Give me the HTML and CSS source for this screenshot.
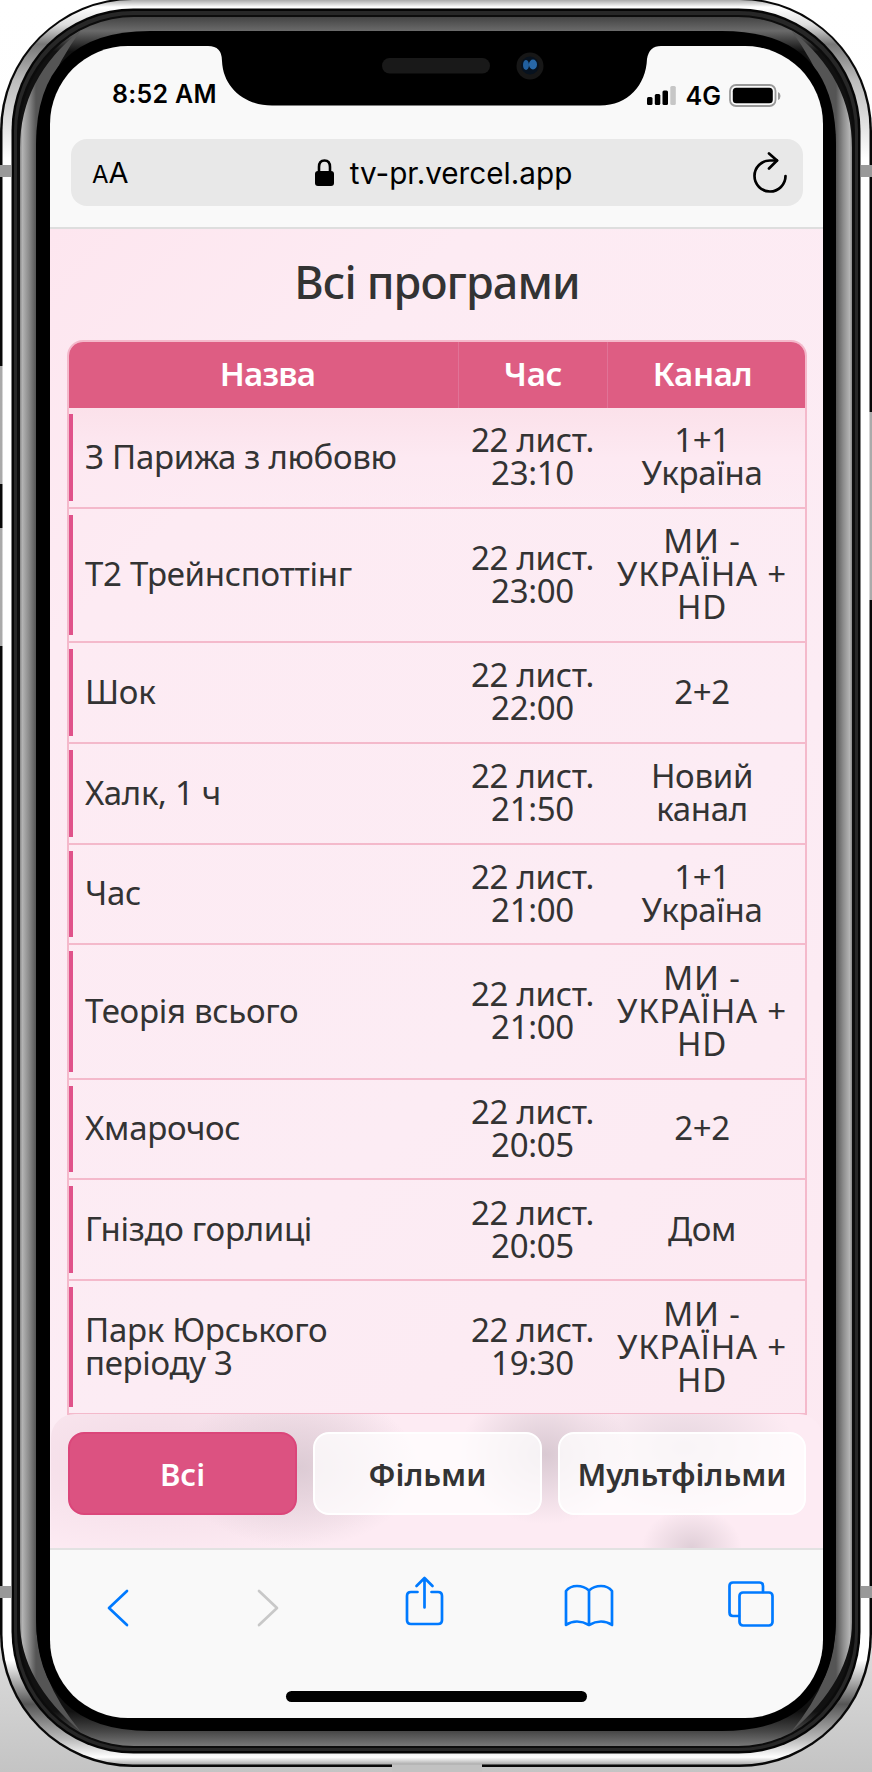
FILE: index.html
```html
<!DOCTYPE html>
<html lang="uk"><head><meta charset="utf-8"><title>Всі програми</title><link rel="stylesheet" href="styles.css"></head>
<body>
<div class="stage">
<svg class="frame" viewBox="0 0 872 1772" aria-hidden="true">
<defs>
<linearGradient id="steel" x1="0" x2="0" y1="0" y2="1766" gradientUnits="userSpaceOnUse"><stop offset="0" stop-color="#aaa"/><stop offset=".004" stop-color="#fff"/><stop offset=".014" stop-color="#ddd"/><stop offset=".025" stop-color="#777"/><stop offset=".045" stop-color="#bbb"/><stop offset=".09" stop-color="#fff"/><stop offset=".94" stop-color="#fff"/><stop offset=".965" stop-color="#555"/><stop offset=".985" stop-color="#bbb"/><stop offset=".995" stop-color="#fff"/><stop offset="1" stop-color="#999"/></linearGradient>
<linearGradient id="lip" x1="0" x2="0" y1="17" y2="1746" gradientUnits="userSpaceOnUse"><stop offset="0" stop-color="#444"/><stop offset=".008" stop-color="#6a6a6a"/><stop offset=".02" stop-color="#111"/><stop offset=".98" stop-color="#111"/><stop offset=".991" stop-color="#444"/><stop offset="1" stop-color="#777"/></linearGradient>
<linearGradient id="side" x1="20" x2="36" y1="0" y2="0" gradientUnits="userSpaceOnUse"><stop offset="0" stop-color="#888"/><stop offset=".15" stop-color="#b4b4b4"/><stop offset=".55" stop-color="#8c8c8c"/><stop offset="1" stop-color="#555"/></linearGradient>
<linearGradient id="back" x1="0" x2="0" y1="0" y2="1"><stop offset="0" stop-color="#fff"/><stop offset=".85" stop-color="#f6f6f6"/><stop offset="1" stop-color="#c4c4c4"/></linearGradient>
</defs>
<rect width="872" height="1772" fill="url(#back)"/>
<rect x="0" y="-2" width="872" height="1769" rx="133" fill="#080808"/>
<path d="M0 366H3V484H0ZM0 528H3V646H0ZM869 412H872V600H869Z" fill="#aaa"/>
<path d="M392 1764H482V1772H392Z" fill="#c2c2c2"/>
<rect x="2.500" y="0" width="867" height="1764.500" rx="130" fill="url(#steel)"/>
<rect x="11.500" y="8.500" width="849" height="1745" rx="122" fill="#050505"/>
<rect x="14" y="11" width="844" height="1740" rx="119" fill="#272727"/>
<rect x="17" y="15" width="838" height="1733" rx="117" fill="#0c0c0c"/>
<rect x="20" y="17" width="832" height="1729" rx="114" fill="url(#lip)"/>
<g id="edge"><path d="M81 30Q20 78 20 148V1622Q20 1680 81 1732Q36 1678 36 1620V150Q36 92 81 30Z" fill="url(#side)"/></g>
<use href="#edge" transform="translate(872 0) scale(-1 1)"/>
<path d="M150 31H722Q836 31 836 145V1617Q836 1731 722 1731H150Q36 1731 36 1617V145Q36 31 150 31Z"/>
<path d="M0 165H11V177H0ZM861 165H872V177H861ZM0 1586H11V1598H0ZM861 1586H872V1598H861Z" fill="#999"/>
</svg>
<main class="screen">
<header class="browser">
<div class="status"><span class="clock">8:52 AM</span><span class="signals">
<svg width="30" height="20" viewBox="0 0 30 20"><rect y="11" width="5.5" height="8" rx="1.5"/><rect x="7.8" y="8" width="5.5" height="11" rx="1.5"/><rect x="15.5" y="4.500" width="5.500" height="14.500" rx="1.5"/><rect x="23.3" y="0" width="5.500" height="19" rx="1.5" fill="#c6c6c6"/></svg>
<b class="net">4G</b>
<svg class="battery" width="52" height="24" viewBox="0 0 52 24"><rect x="1" y="1" width="45.500" height="21" rx="6" fill="none" stroke="#999" stroke-width="1.8"/><rect x="3.800" y="3.800" width="40" height="15.500" rx="3.500"/><path d="M49 8Q51.500 9 51.500 12T49 16Z" fill="#999"/></svg></span></div>
<div class="address"><span class="reader"><small>A</small>A</span>
<span class="url"><svg width="20" height="28" viewBox="0 0 20 28"><rect x="0" y="12" width="19" height="15" rx="3"/><path d="M4 13V8Q4 1.500 9.500 1.500T15 8V13" fill="none" stroke="#000" stroke-width="2.600"/></svg><span>tv-pr.vercel.app</span></span>
<svg class="reload" width="34" height="42" viewBox="0 0 34 42" fill="none" stroke="#000" stroke-width="2.700" stroke-linecap="round" stroke-linejoin="round"><path d="M24 8.500H17A15.500 15.500 0 1 0 32.500 24"/><path d="M16 1.500L24 8.500L16 16.500"/></svg></div>
</header>
<section class="page"><h1><span>Всі програми</span></h1>
<table><colgroup><col class="c1"><col class="c2"><col class="c3"></colgroup>
<thead><tr><th>Назва</th><th>Час</th><th>Канал</th></tr></thead>
<tbody>
<tr><td>З Парижа з любовю</td><td>22 лист.<br>23:10</td><td>1+1<br>Україна</td></tr>
<tr class="tall"><td>Т2 Трейнспоттінг</td><td>22 лист.<br>23:00</td><td>МИ -<br>УКРАЇНА +<br>HD</td></tr>
<tr><td>Шок</td><td>22 лист.<br>22:00</td><td>2+2</td></tr>
<tr><td>Халк, 1 ч</td><td>22 лист.<br>21:50</td><td>Новий<br>канал</td></tr>
<tr><td>Час</td><td>22 лист.<br>21:00</td><td>1+1<br>Україна</td></tr>
<tr class="tall"><td>Теорія всього</td><td>22 лист.<br>21:00</td><td>МИ -<br>УКРАЇНА +<br>HD</td></tr>
<tr><td>Хмарочос</td><td>22 лист.<br>20:05</td><td>2+2</td></tr>
<tr><td>Гніздо горлиці</td><td>22 лист.<br>20:05</td><td>Дом</td></tr>
<tr class="tall"><td>Парк Юрського<br>періоду 3</td><td>22 лист.<br>19:30</td><td>МИ -<br>УКРАЇНА +<br>HD</td></tr>
</tbody></table>
<nav class="tabs"><button class="active">Всі</button><button>Фільми</button><button class="wide">Мультфільми</button></nav>
</section>
<footer class="toolbar"><div class="icons">
<svg class="back" width="22" height="38" viewBox="0 0 22 38" stroke="#007aff"><path d="M20 2L2 19L20 36"/></svg>
<svg class="forward" width="22" height="38" viewBox="0 0 22 38" stroke="#c8c8c8"><path d="M2 2L20 19L2 36"/></svg>
<svg class="share" width="40" height="50" viewBox="0 0 40 50" stroke="#007aff"><path d="M12.500 16H6Q2 16 2 20V44Q2 48 6 48H33Q37 48 37 44V20Q37 16 33 16H26.500M19.500 31.500V2M11.500 10L19.500 2L27.500 10"/></svg>
<svg class="book" width="50" height="43" viewBox="0 0 50 43" stroke="#007aff"><path d="M25 6.500Q20 2 13 2T2 7V41Q7 37.500 13 37.500T25 41Q31 37.500 37 37.500T48 41V7Q44 2 37 2T25 6.500V41"/></svg>
<svg class="pages" width="46" height="46" viewBox="0 0 46 46" stroke="#007aff"><path d="M11 35H5Q1.500 35 1.500 31.500V5Q1.500 1.500 5 1.500H31.500Q35 1.500 35 5V11"/><rect x="11.500" y="11.500" width="33" height="33" rx="3.500"/></svg>
</div><div class="home"></div></footer>
</main>
<svg class="notch" width="472" height="64" viewBox="0 0 472 64"><path d="M8 0V1Q22 1 22 16C23 42 44 60.500 72 60.500H400C428 60.500 446 40 447 14Q449 1 461 1V0Z"/><rect x="182" y="13" width="108" height="15.500" rx="7.700" fill="#191919"/><circle cx="330" cy="21" r="13.500" fill="#171717"/><circle cx="330" cy="20.500" r="9" fill="#07121f"/><ellipse cx="326" cy="20" rx="3" ry="5" fill="#215f9e"/><ellipse cx="333" cy="19.500" rx="4" ry="5" fill="#2868a8"/></svg>
</div></body></html>
```
FILE: styles.css
```css
* { box-sizing: border-box; }
body { margin: 0; }
.stage { position: relative; width: 872px; height: 1772px; padding: 46px 49px 54px 50px; overflow: hidden; }
.frame { position: absolute; inset: 0; width: 872px; height: 1772px; }
.screen { position: relative; width: 773px; height: 1672px; border-radius: 78px; overflow: hidden; background: #f9f9f9; display: flex; flex-direction: column; }
.notch { position: absolute; left: 200px; top: 45px; }
.browser { height: 183px; border-bottom: 2px solid #dedede; padding: 0 20px 0 21px; }
.status { height: 93px; display: flex; justify-content: space-between; padding: 32px 22px 0 41px; font-family: Inter, sans-serif; }
.clock { font-size: 25px; line-height: 32px; font-weight: 600; letter-spacing: .3px; }
.signals { display: flex; align-items: center; height: 35px; }
.net { font-size: 25px; font-weight: 600; margin: 0 8px 0 9px; }
.address { height: 67px; border-radius: 16px; background: #e8e8e8; display: flex; align-items: center; justify-content: space-between; padding: 0 16px 0 21px; font-family: Inter, sans-serif; }
.reader { font-size: 29px; line-height: 40px; width: 42px; padding-top: 3px; }
.reader small { font-size: 24px; }
.url { display: flex; align-items: center; gap: 15px; font-size: 29.7px; }
.page { height: 1319px; background: linear-gradient(135deg, #fde6ef, #fdebf3 20%, #fcecf4 60%, #fce9f1); padding: 0 16px 0 17px; position: relative; font-family: "Noto Sans", sans-serif; color: #333; }
h1 { font-size: 45px; line-height: 60px; font-weight: 500; text-align: center; margin: 0; padding: 23px 0 28px; letter-spacing: -.9px; }
table { width: 740px; border: 2px solid #f4b9cb; border-bottom: 0; border-radius: 16px 16px 0 0; border-spacing: 0; table-layout: fixed; overflow: hidden; }
.c1 { width: 389px; } .c2 { width: 149px; } .c3 { width: 198px; }
th { height: 66px; padding: 0 0 3px; background: #de5d83; color: #fff; font-size: 33px; line-height: 33px; font-weight: 600; letter-spacing: -.3px; }
th:first-child { padding-left: 8px; letter-spacing: -.8px; }
th:last-child, td:last-child { padding-right: 8px; }
th + th { border-left: 1px solid #e17397; }
td { height: 100.8px; padding: 0 0 2px; border-bottom: 2px solid #f4b9cb; text-align: center; font-size: 33px; line-height: 33px; letter-spacing: -.3px; }
.tall td { height: 134.2px; }
.tall td:last-child { letter-spacing: .8px; }
td:first-child { text-align: left; padding-left: 16px; background: linear-gradient(#e0528a, #e0528a) 0 50% / 4px calc(100% - 12px) no-repeat; }
tbody tr:first-child { background: linear-gradient(#fbe1ea, #fde9f2 50%, transparent); }
.tabs { position: absolute; left: 1px; right: 0; bottom: 0; height: 134px; border-radius: 24px 24px 0 0; padding: 18px 16px 0 17px; display: flex; gap: 16px; background: radial-gradient(50px 40px at 83% 100%, #dfced7, transparent), radial-gradient(85px 70px at 64% 30%, #d9c9d2, transparent), radial-gradient(110px 70px at 82% 25%, #e6d6df, transparent), radial-gradient(120px 80px at 32% 40%, #dccbd4, transparent), radial-gradient(250px 100px at 15% 35%, #f0d8e3, transparent), #fdebf3; }
.tabs button { width: 229px; height: 83px; border: 2px solid #fff; border-radius: 16px; background: rgba(255,255,255,.75); font: 600 31px/40px "Noto Sans", sans-serif; color: #333; padding: 0; white-space: nowrap; }
.tabs .wide { width: 248px; }
.tabs .active { background: #dc5281; border-color: #db467a; color: #fff; }
.toolbar { height: 170px; border-top: 2px solid #e2e2e2; }
.icons { height: 140px; padding: 26px 49px 0 57px; display: flex; align-items: flex-start; }
.icons svg { fill: none; stroke-width: 2.7; stroke-linecap: round; stroke-linejoin: round; }
.back, .forward { margin-top: 13px; }
.forward { margin-left: 128px; }
.share { margin-left: 126px; }
.book { margin: 8px 0 0 119px; }
.pages { margin: 5px 0 0 auto; }
.home { width: 301px; height: 11px; border-radius: 6px; background: #000; margin: 1px auto; }
```
